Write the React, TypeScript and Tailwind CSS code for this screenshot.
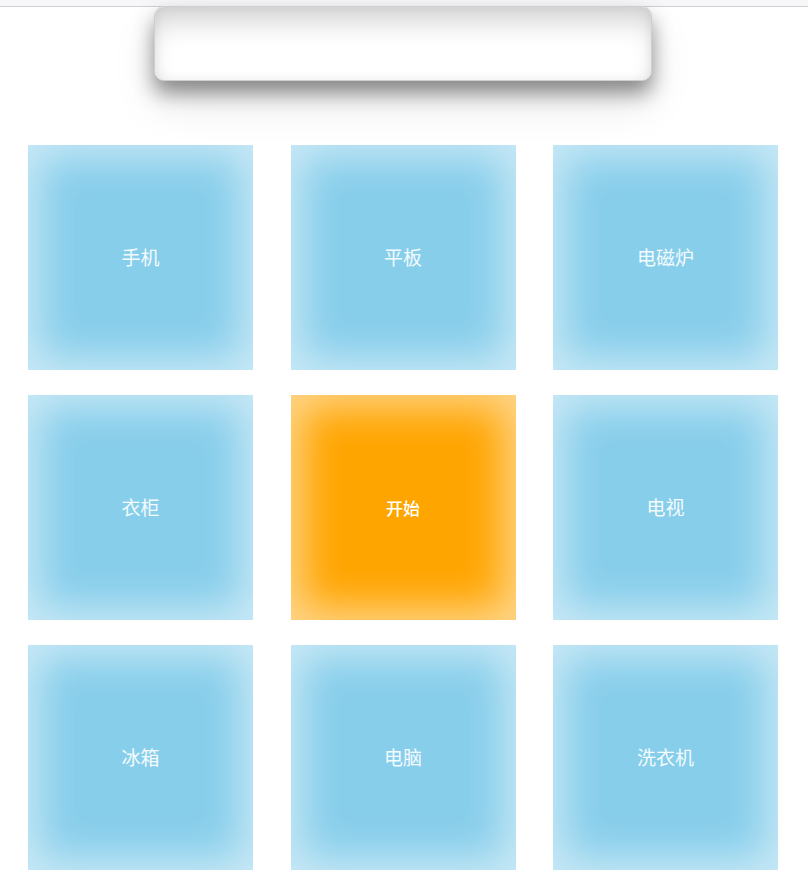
import React from "react";

const items = ["手机", "平板", "电磁炉", "衣柜", "开始", "电视", "冰箱", "电脑", "洗衣机"];

export default function App() {
  return (
    <div className="min-h-[881px] w-[808px] bg-white" style={{ fontFamily: '"Noto Sans CJK SC", "Noto Sans", sans-serif' }}>
      <div className="h-[7px] bg-[#f7f7f9] border-b border-[#d0d0d0]" />
      <div className="flex">
        <div className="-mt-px ml-[154px] h-[75px] w-[498px] rounded-[10px] border border-[#cfcfcf] bg-white shadow-[inset_0_22px_26px_-6px_rgba(0,0,0,0.16),inset_0_0_12px_rgba(0,0,0,0.08),0_12px_20px_rgba(0,0,0,0.42),0_22px_44px_rgba(0,0,0,0.1)]" />
      </div>
      <div className="mt-[64px] grid grid-cols-[225px_225px_225px] gap-x-[37.5px] gap-y-[25px] pl-[28px]">
        {items.map((t) => (
          <div
            key={t}
            className={
              t === "开始"
                ? "flex h-[225px] w-[225px] items-center justify-center bg-[#ffa500] text-[17px] font-medium text-white shadow-[inset_0_0_40px_12px_rgba(255,255,255,0.55)]"
                : "flex h-[225px] w-[225px] items-center justify-center bg-[#87ceeb] text-[19px] text-[#f4fbfe] shadow-[inset_0_0_40px_12px_rgba(255,255,255,0.55)]"
            }
          >
            {t}
          </div>
        ))}
      </div>
    </div>
  );
}
